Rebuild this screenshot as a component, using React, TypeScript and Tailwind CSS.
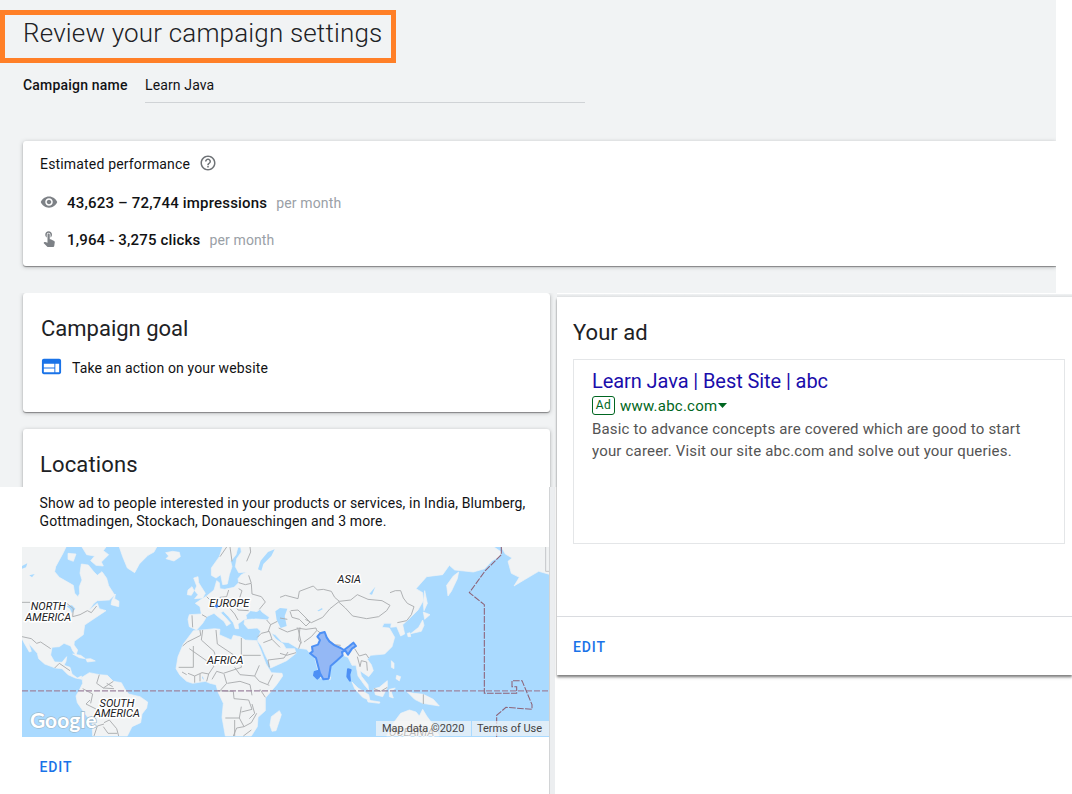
import React from "react";
import { MdOutlineHelpOutline, MdRemoveRedEye, MdTouchApp, MdWeb } from "react-icons/md";

const CARD_SHADOW = "shadow-[0_1px_1px_rgba(0,0,0,0.35),0_1px_4px_rgba(60,64,67,0.35)]";

const LAND = [
  // North and Central America
  "M6 21H138L130 38L107 80L104 95L118 112L160 136L164 160L174 170L179 160L178 140L186 120L180 100L184 72L205 75L222 96L232 106L246 95L260 115L266 137L284 165L268 180L232 182L222 190L205 212L232 190L238 206L258 212L240 224L216 240L194 255L190 284L163 304L162 315L173 330L168 345L158 332L152 318L132 310L118 320L96 322L92 345L104 366L126 367L140 350L138 364L132 376L150 382L156 402L172 414L184 408L186 418L166 414L144 404L126 386L106 384L74 372L56 356L52 340L26 310L34 334L28 336L12 308L6 296Z",
  "M144 40L168 42L160 64L144 58Z",
  "M186 21H258L250 32L266 44L244 66L250 78L228 76L212 62L224 48L200 44Z",
  "M276 180L286 162L284 176L297 184L296 200L273 194Z",
  "M298 21L308 50L322 84L344 98L358 72L384 46L402 36L410 21Z",
  "M437 38L458 34L478 37L481 50L462 63L438 56L446 48Z",
  "M158 342L182 346L196 356L178 353Z",
  "M198 357L212 356L226 363L202 366Z",
  // South America
  "M186 412L208 398L238 404L262 406L280 424L304 428L314 446L326 462L360 470L383 486L380 504L366 522L362 548L336 560L322 588H218L216 548L194 520L172 488L168 468L180 446L188 430Z",
  // British Isles
  "M521 114L534 110L536 128L546 144L556 160L548 174L524 176L534 164L524 152L530 138Z",
  "M504 150L516 140L522 152L514 166L502 164Z",
  // Eurasia
  "M608 21L598 50L574 84L574 106L588 114L602 104L608 134L622 132L628 104L636 80L632 64L648 44L654 21H662L664 36L650 56L646 80L656 98L680 96L664 104L654 116L656 128L642 142L614 148L600 146L598 128L590 122L582 150L560 168L544 178L526 190L540 200L544 222L508 224L504 238L508 260L530 270L548 250L560 230L582 220L596 232L612 244L620 258L632 250L616 232L602 218L610 214L626 230L640 248L646 266L656 266L654 252L670 240L680 236L678 226L692 212L704 220L720 208L726 216L748 232L744 240L700 236L674 240L672 252L684 266L712 264L722 274L712 302L724 318L736 346L748 370L752 384L800 362L828 340L824 326L798 326L790 312L768 298L754 280L766 284L786 306L806 308L832 324L860 328L872 342L884 352L900 414L926 416L932 380L968 346L984 352L996 376L1008 376L1014 408L1034 436L1046 450L1044 434L1024 408L1020 392L1034 402L1046 410L1060 392L1054 374L1042 358L1052 346L1094 342L1116 320L1124 292L1108 264L1086 262L1092 250L1114 250L1112 262L1130 260L1142 288L1154 282L1148 254L1170 234L1194 210L1210 182L1208 158L1188 146L1220 110L1268 104L1288 76L1304 90L1360 96L1394 86L1416 62L1438 50L1444 36L1422 21Z",
  "M1280 136L1300 108L1316 96L1312 116L1294 154L1284 168Z",
  "M1444 21H1588V103L1556 94L1512 120L1482 138L1498 112L1474 100L1464 64L1476 54L1456 42Z",
  // Africa
  "M520 272L546 270L584 266L600 268L598 284L634 300L640 286L660 290L676 300L710 302L722 330L738 372L754 398L786 400L788 408L770 434L736 474L736 512L714 532L712 560L694 588H616L606 532L610 490L594 456L588 434L570 430L556 424L518 430L500 424L480 406L468 386L474 350L490 312Z",
  "M754 530L778 512L784 524L768 572L756 574L750 556Z",
  // Pacific and Indian Ocean islands
  "M1214 152L1222 190L1212 212L1210 192Z",
  "M1210 216L1230 224L1214 238Z",
  "M1208 240L1212 256L1204 274L1172 281L1196 262Z",
  "M1162 280L1170 278L1172 290L1164 290Z",
  "M1114 362L1122 370L1122 386L1114 382Z",
  "M1130 406L1142 410L1138 423L1128 416Z",
  "M996 426L1014 444L1046 464L1050 482L1028 472L1004 446Z",
  "M1042 480L1080 486L1078 490L1044 486Z",
  "M1062 446L1078 442L1102 422L1102 442L1088 470L1066 464Z",
  "M1108 448L1126 444L1114 456L1120 474L1108 470Z",
  "M1162 456L1182 460L1210 463L1240 478L1258 498L1208 490L1184 478Z",
  "M926 408L932 412L930 420L922 416Z",
  // Australia
  "M1100 588L1118 552L1142 520L1168 510L1188 516L1198 528L1208 508L1220 528L1238 552L1258 588Z",
];

const WATER = [
  "M766 214L780 204L802 206L794 228L800 258L782 264L770 240Z",
  "M692 214L712 216L724 228L702 236L684 234Z",
  "M6 78L22 70L18 82L6 86Z",
  "M28 106L44 102L36 112Z",
  "M138 198L156 196L166 206L156 220L150 206Z",
  "M1048 162L1066 140L1056 164Z",
  "M714 88L722 62L744 36L764 28L754 48L730 72L724 92Z",
  "M892 212L906 204L908 208L896 214Z",
  "M548 408L552 420L546 414Z",
];

const BORDERS = [
  "M6 187H30M140 190L160 206L158 230L180 224L202 212L214 218L230 198M6 290L34 296L50 310L62 306L92 326M104 384L118 370L138 384L150 392",
  "M600 50L620 21M636 64L630 21M656 128L676 134L694 130L686 106M694 132L696 162L724 170L736 186L718 208M656 146L666 152L658 176L684 182M626 150L620 170L600 172L612 190L590 206M560 170L574 184L582 206M642 190L654 210L686 212M630 206L644 222L654 240M546 224L560 232M680 64L692 36L690 21M516 226L518 262",
  "M540 270L542 286L502 306L488 318M508 326L582 378L566 402L546 398L524 408L504 400M520 318V382L476 382M548 270L544 300L582 334L590 360M588 270L592 312L640 344M664 294V346H722M664 346V382L610 400L590 394L576 418M644 382L660 404L704 408L718 376M612 402L620 430L602 450M704 408L718 424L748 436M758 404L744 432M622 430L660 424L690 434L696 466M594 452L640 454L642 476L686 480L696 508L664 516M616 534H658L664 500M658 534L672 560L694 548L710 520M644 540V588M688 536L704 520L696 492M720 448L736 472M524 408V428M540 402V424M566 402L560 424M486 396L500 404M640 588L650 564L672 560M670 588L694 570",
  "M712 292L724 280L748 274L756 298M730 308L756 298L780 322M748 382L744 360L792 354L804 336M740 240L752 254L744 276M772 244L752 254M776 264L802 276L834 266L844 310M802 238L780 234",
  "M780 172L796 166L834 176L838 154L880 138L892 150L910 148L934 154L944 172L958 184L930 206L908 232L874 248L856 238M812 212L834 210L870 246L858 258L838 238L816 232L810 214M840 262L836 300L842 308L836 326M830 264L858 268L888 264L890 272L874 290L852 306",
  "M958 184L992 180L1012 164L1044 178L1086 182L1110 196L1100 212L1076 230L1040 236L998 228L976 204L956 186M1110 158L1126 152H1142L1150 174L1162 190L1182 200L1174 224L1160 242L1132 248M892 272L918 292L942 314L962 316M1004 326L1018 348L1038 342L1046 354M1012 350L1020 380L1024 362L1040 366L1042 392",
  "M780 340L800 346L828 338M188 446L218 462L212 490M238 404L230 430L250 444L280 424M250 444L282 446M260 430L278 440M210 480L198 492L230 508M222 588L232 558L252 552M252 548L268 540L290 566L296 588M250 560L264 580H292M1210 463V492M1062 446L1082 454L1102 442",
];

const INDIA =
  "M900 280L914 276L920 292L928 304L944 316L962 324L972 330L988 318L1000 308L1008 318L996 326L984 344L976 332L966 336L968 346L950 362L932 378L926 416L910 418L900 400L888 354L870 340L878 334L876 320L894 314L900 300L892 290Z";

function WorldMap() {
  return (
    <svg className="block h-[190px] w-[527px]" viewBox="6 21 1581 570" preserveAspectRatio="none">
      <rect x="6" y="21" width="1581" height="570" fill="#aadaff" />
      <g fill="#f1f3f4" stroke="#f1f3f4" strokeWidth="2" strokeLinejoin="round">
        {LAND.map((d) => (
          <path key={d} d={d} />
        ))}
      </g>
      <g fill="#aadaff">
        {WATER.map((d) => (
          <path key={d} d={d} />
        ))}
      </g>
      <g fill="none" stroke="#aaacae" strokeWidth="2.8" strokeLinejoin="round">
        {BORDERS.map((d) => (
          <path key={d} d={d} />
        ))}
      </g>
      <g fill="#94b8f5" stroke="#4d90f5" strokeWidth="6" strokeLinejoin="round">
        <path d={INDIA} />
        <path d="M884 396L896 392L900 408L892 416L882 406Z" fill="#4d90f5" />
        <path d="M984 388L992 390L988 404L990 422L982 410Z" fill="#4d90f5" />
      </g>
      <path d="M6 452.500H1587" stroke="#9d849f" strokeWidth="3.800" strokeDasharray="18 6" />
      <path
        d="M1444 21V44L1396 92L1348 158L1393 194V460H1490V440H1476V422H1506L1536 494V508L1458 502L1430 526V591"
        fill="none"
        stroke="#8d6378"
        strokeWidth="3.200"
        strokeDasharray="20 4"
      />
      <path d="M1577 21V94H1587" fill="none" stroke="#c4c6c9" strokeWidth="3" />
      <g
        className="font-['Roboto']"
        fontSize="33"
        fontStyle="italic"
        textAnchor="middle"
        fill="#202124"
        stroke="#ffffff"
        strokeWidth="9"
        strokeLinejoin="round"
        paintOrder="stroke"
      >
        <text x="85" y="211">NORTH</text>
        <text x="85" y="242">AMERICA</text>
        <text x="628" y="200">EUROPE</text>
        <text x="616" y="373">AFRICA</text>
        <text x="988" y="130">ASIA</text>
        <text x="291" y="500">SOUTH</text>
        <text x="291" y="531">AMERICA</text>
        <text x="1175" y="587" fill="#303134" strokeWidth="4">
          OCEANIA
        </text>
      </g>
      <circle cx="590" cy="198" r="5" fill="#4285f4" />
      <text
        x="30"
        y="563"
        className="font-['Lato']"
        fontSize="62"
        fontWeight="700"
        textLength="200"
        lengthAdjust="spacingAndGlyphs"
        fill="#ffffff"
        stroke="#9db9cd"
        strokeWidth="4"
        paintOrder="stroke"
      >
        Google
      </text>
    </svg>
  );
}

export default function App() {
  return (
    <div className="h-[794px] w-[1072px] overflow-hidden bg-white font-['Roboto',sans-serif] text-sm tracking-[0.13px] text-[#111214]">
      <header className="flex h-[293px] w-[1056px] flex-col overflow-hidden bg-[#f1f3f4] pt-[10px]">
        <h1 className="h-[53px] w-[396px] shrink-0 border-[5px] border-[#ff7f27] pl-[18px] text-[26px] leading-[37px] font-light tracking-[0.17px] whitespace-nowrap text-[#202124]">
          Review your campaign settings
        </h1>
        <div className="mt-[7px] flex h-[33px] shrink-0 pl-[23px] leading-[30px]">
          <span className="w-[122px] font-medium tracking-[0.19px]">Campaign name</span>
          <span className="w-[440px] border-b border-[#d0d3d6]">Learn Java</span>
        </div>
        <section className={`mt-[38px] ml-[23px] h-[125px] shrink-0 rounded-l-[3px] bg-white pt-[12px] pl-[17px] ${CARD_SHADOW}`}>
          <div className="flex h-[22px] items-center gap-[9px]">
            <span className="tracking-[0.17px]">Estimated performance</span>
            <MdOutlineHelpOutline className="mb-[2px] size-[18px] text-[#6f7377]" />
          </div>
          <div className="mt-[17px] flex h-[22px] items-center">
            <MdRemoveRedEye className="mr-[9px] mb-[3px] size-[18px] text-[#7d8186]" />
            <span className="pt-px text-[15px] font-medium tracking-[0.19px]">43,623 – 72,744 impressions</span>
            <span className="ml-[9px] text-[#9aa0a6]">per month</span>
          </div>
          <div className="mt-[15px] flex h-[22px] items-center">
            <MdTouchApp className="mr-[9px] mb-[4px] size-[18px] text-[#7d8186]" />
            <span className="pt-px text-[15px] font-medium tracking-[0.17px]">1,964 - 3,275 clicks</span>
            <span className="ml-[9px] text-[#9aa0a6]">per month</span>
          </div>
        </section>
      </header>

      <main className="flex h-[501px]">
        <div className="flex w-[557px] flex-col">
          <div className="flex h-[194px] shrink-0 flex-col gap-[17px] overflow-hidden bg-[#f1f3f4] pr-[7px] pl-[23px]">
            <section className={`h-[119px] shrink-0 rounded-[3px] bg-white pt-[21px] pl-[18px] ${CARD_SHADOW}`}>
              <h2 className="text-[22px] leading-[30px] tracking-normal text-[#202124]">Campaign goal</h2>
              <div className="mt-[14px] flex h-[20px] items-center gap-[9px]">
                <MdWeb className="mb-[3px] -ml-px size-[23px] text-[#1a73e8]" />
                <span>Take an action on your website</span>
              </div>
            </section>
            <section className={`h-[80px] shrink-0 rounded-t-[3px] bg-white pt-[21px] pl-[17px] ${CARD_SHADOW}`}>
              <h2 className="text-[22px] leading-[30px] text-[#202124]">Locations</h2>
            </section>
          </div>
          <section className="ml-[22px] flex h-[307px] w-[533px] flex-col border-r-[5px] border-[#eceef0]">
            <div className="flex h-full flex-col border-r border-[#d2d4d6]">
              <p className="h-[60px] pt-[7px] pl-[17.500px] leading-[18px] whitespace-nowrap">
                Show ad to people interested in your products or services, in India, Blumberg,
                <br />
                Gottmadingen, Stockach, Donaueschingen and 3 more.
              </p>
              <div className="relative h-[190px] border-b border-[#dadce0]">
                <WorldMap />
                <div className="absolute right-0 bottom-0 flex h-[15px] gap-px text-[11px] leading-[15px] tracking-normal whitespace-nowrap text-[#444444]">
                  <span className="w-[95px] bg-[#f5f5f5]/70 pl-[6px]">Map data ©2020</span>
                  <span className="w-[77px] bg-[#f5f5f5]/70 pl-[5px]">Terms of Use</span>
                </div>
              </div>
              <button className="mt-[20px] ml-[17.500px] self-start font-medium tracking-[0.9px] text-[#1a73e8]">EDIT</button>
            </div>
          </section>
        </div>

        <div className="flex flex-1 flex-col">
          <div className="h-px bg-white" />
          <div className="h-[3px] bg-linear-to-b from-[#f1f3f4] to-[#dfe1e3]" />
          <section className="flex h-[378px] flex-col bg-white shadow-[0_2px_2px_rgba(0,0,0,0.4),0_3px_3px_rgba(0,0,0,0.15)]">
            <h2 className="pt-[21px] pl-[16px] text-[22px] leading-[30px] tracking-[0.05px] text-[#202124]">Your ad</h2>
            <article className="mt-[11px] ml-[16px] h-[185px] w-[492px] border border-[#e4e6e8] pt-[9px] pl-[18px] whitespace-nowrap">
              <h3 className="text-[20px] leading-[24px] tracking-[-0.08px] text-[#1a0dab]">Learn Java | Best Site | abc</h3>
              <div className="mt-[3px] flex h-[19px] items-center text-[15px] text-[#006621]">
                <span className="flex h-[19px] w-[23px] items-center justify-center rounded-[3px] border border-[#006621] text-[12px] tracking-[0.4px]">
                  Ad
                </span>
                <span className="ml-[5px] pt-[2px] tracking-[0.23px]">www.abc.com</span>
                <svg className="ml-px h-[5px] w-[9px]" viewBox="0 0 9 5">
                  <path d="M0 0H9L4.500 5Z" fill="#006621" />
                </svg>
              </div>
              <p className="mt-[3px] text-[15px] leading-[22px] tracking-[0.18px] text-[#545454]">
                Basic to advance concepts are covered which are good to start
                <br />
                your career. Visit our site abc.com and solve out your queries.
              </p>
            </article>
            <div className="mt-auto h-[59px] border-t border-[#dadce0] pt-[20px] pl-[16px]">
              <button className="block font-medium tracking-[0.9px] text-[#1a73e8]">EDIT</button>
            </div>
          </section>
        </div>
      </main>
    </div>
  );
}
